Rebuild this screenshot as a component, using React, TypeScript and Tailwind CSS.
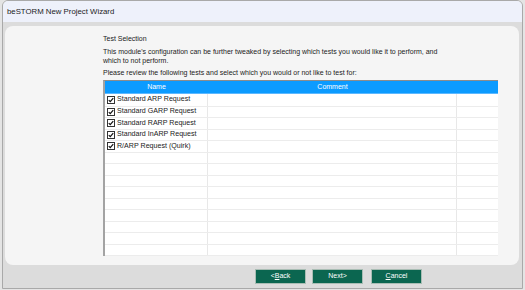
import React from "react";

const tests = [
  "Standard ARP Request",
  "Standard GARP Request",
  "Standard RARP Request",
  "Standard InARP Request",
  "R/ARP Request (Quirk)",
];

function Check() {
  return (
    <span className="flex h-[8px] w-[8px] items-center justify-center border border-[#333] bg-white">
      <svg viewBox="0 0 8 8" className="h-[6px] w-[6px]">
        <path d="M1 4.2 L3 6.2 L7 1.6" fill="none" stroke="#111" strokeWidth="1.6" />
      </svg>
    </span>
  );
}

export default function App() {
  const rows = Array.from({ length: 14 }, (_, i) => tests[i] ?? "");

  return (
    <div
      className="h-[290px] w-[525px] bg-[#e4e4e4] pl-[2px] text-[#1b1b1b]"
      style={{ fontFamily: '"Liberation Sans", Arial, sans-serif' }}
    >
      <div className="flex h-[289px] w-[521px] flex-col overflow-hidden rounded-t-[6px] border border-[#a9a9a9]">
        {/* Title bar */}
        <div className="flex h-[21px] items-center bg-[#eef1fb] pl-[4px] text-[7.8px]">
          beSTORM New Project Wizard
        </div>

        {/* Body */}
        <div className="flex flex-1 flex-col bg-[#dcdcdc] pl-[2px] pr-[3px] pt-[4px]">
          <div className="h-[239px] rounded-[8px] bg-[#f5f5f5] pl-[98px] pt-[8px]">
            <div className="text-[7px] leading-[9px]">Test Selection</div>
            <p className="mt-[4px] w-[350px] text-[7px] leading-[9px]">
              This module's configuration can be further tweaked by selecting which tests you would like it to perform, and which to not perform.
            </p>
            <div className="mt-[3px] text-[7px] leading-[9px]">
              Please review the following tests and select which you would or not like to test for:
            </div>

            {/* Table */}
            <div className="mt-[3px] h-[176px] w-[395px] border-l-2 border-t border-l-[#a3a3a3] border-t-[#8c8c8c] bg-white">
              <div className="flex h-[13px] border-b border-[#5cb8ff] bg-[#0c9bff] text-[7px] text-white">
                <div className="flex w-[103px] items-center justify-center">Name</div>
                <div className="flex w-[249px] items-center justify-center">Comment</div>
                <div className="flex-1" />
              </div>
              {rows.map((name, i) => (
                <div
                  key={i}
                  className={`flex border-b border-[#ececec] text-[7.1px] ${i === 0 ? "h-[12.5px]" : "h-[11.5px]"}`}
                >
                  <div className="flex w-[103px] items-center gap-[2px] border-r border-[#e8e8e8] pl-[2px]">
                    {name && <Check />}
                    <span>{name}</span>
                  </div>
                  <div className="w-[249px] border-r border-[#e8e8e8]" />
                  <div className="flex-1" />
                </div>
              ))}
            </div>
          </div>

          {/* Buttons */}
          <div className="mt-[4px] flex pl-[250px] text-[7px] text-white">
            <button className="h-[15px] w-[51px] border border-[#a9bdb4] bg-[#0b6650]">
              &lt;<span className="underline">B</span>ack
            </button>
            <button className="ml-[6px] h-[15px] w-[51px] border border-[#a9bdb4] bg-[#0b6650]">
              Next&gt;
            </button>
            <button className="ml-[8px] h-[15px] w-[51px] border border-[#a9bdb4] bg-[#0b6650]">
              <span className="underline">C</span>ancel
            </button>
          </div>
        </div>
      </div>
    </div>
  );
}
